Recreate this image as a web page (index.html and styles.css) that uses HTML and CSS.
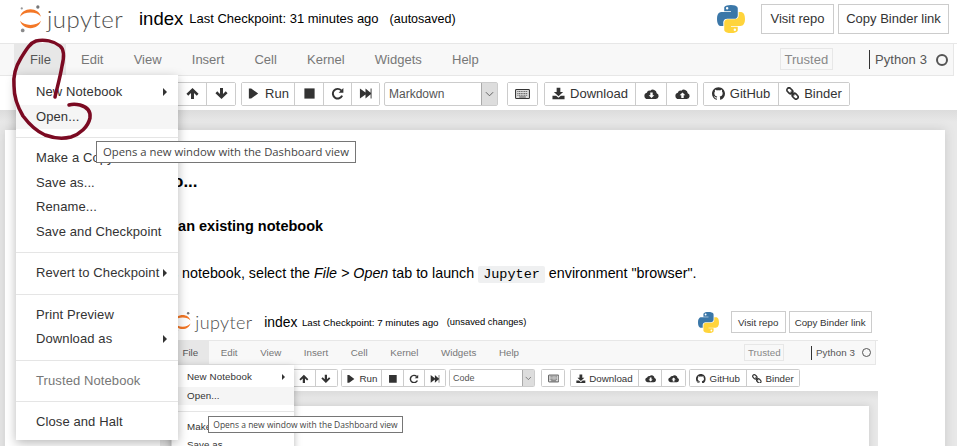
FILE: index.html
```html
<!DOCTYPE html>
<html lang="en">
<head>
<meta charset="utf-8">
<title>index - Jupyter</title>
<link rel="stylesheet" href="styles.css">
</head>
<body>
<svg class="sprite" aria-hidden="true">
  <symbol id="i-up" viewBox="0 0 14 14"><path d="M7 1 13.5 7.4 11.6 9.3 8.6 6.4V13H5.4V6.4L2.4 9.3.5 7.4Z"/></symbol>
  <symbol id="i-down" viewBox="0 0 14 14"><path d="M7 13 .5 6.6 2.4 4.7 5.4 7.6V1H8.600V7.600L11.600 4.700 13.500 6.600Z"/></symbol>
  <symbol id="i-step" viewBox="0 0 14 14"><path d="M2 1.500H4.500V12.500H2ZM4.500 1.500 12 7 4.500 12.500Z"/></symbol>
  <symbol id="i-stop" viewBox="0 0 14 14"><path d="M1.500 1.500H12.500V12.500H1.500Z"/></symbol>
  <symbol id="i-redo" viewBox="0 0 14 14"><path d="M11 3.600A5.200 5.200 0 1 0 12 9.300" fill="none" stroke="currentColor" stroke-width="2.100"/><path d="M8.200 6.200H13.300V1Z"/></symbol>
  <symbol id="i-ff" viewBox="0 0 14 14"><path d="M1 1.500 7 6V1.500L12.500 6.300V1.500H13.500V12.500H12.500V7.700L7 12.500V8L1 12.500Z"/></symbol>
  <symbol id="i-key" viewBox="0 0 16 12"><rect x=".6" y="1.100" width="14.800" height="9.800" rx="1" fill="#ddd" stroke="#333" stroke-width="1.100"/><path d="M2.500 3.400H13.500M2.500 5.400H13.500M2.500 7.400H13.500" stroke="#666" stroke-width="1.100" stroke-dasharray="1.200 .6"/><path d="M4.500 9.200H11.500" stroke="#444" stroke-width="1"/></symbol>
  <symbol id="i-dl" viewBox="0 0 14 14"><path d="M5 .8H9V5.500H12L7 10 2 5.500H5Z"/><path d="M.5 9.500H4.500L7 11.700 9.500 9.500H13.500V13.300H.5Z"/></symbol>
  <symbol id="i-cdl" viewBox="0 0 15 12"><path d="M3.500 11A3.200 3.200 0 0 1 2.800 4.700 3 3 0 0 1 6.300 2.700 3.800 3.800 0 0 1 12.700 5.200 3 3 0 0 1 11.800 11Z"/><path d="M6.300 4.500H8.700V7.200H10.300L7.500 10 4.700 7.200H6.300Z" fill="#fff"/></symbol>
  <symbol id="i-cul" viewBox="0 0 15 12"><path d="M3.500 11A3.200 3.200 0 0 1 2.800 4.700 3 3 0 0 1 6.300 2.700 3.800 3.800 0 0 1 12.700 5.200 3 3 0 0 1 11.800 11Z"/><path d="M6.300 10H8.700V7.300H10.300L7.500 4.500 4.700 7.300H6.300Z" fill="#fff"/></symbol>
  <symbol id="i-gh" viewBox="0 0 24 24"><path d="M12 .297c-6.630 0-12 5.373-12 12 0 5.303 3.438 9.800 8.205 11.385.6.113.82-.258.82-.577 0-.285-.01-1.040-.015-2.040-3.338.724-4.042-1.610-4.042-1.610C4.422 18.070 3.633 17.700 3.633 17.700c-1.087-.744.084-.729.084-.729 1.205.084 1.838 1.236 1.838 1.236 1.070 1.835 2.809 1.305 3.495.998.108-.776.417-1.305.76-1.605-2.665-.3-5.466-1.332-5.466-5.930 0-1.310.465-2.380 1.235-3.220-.135-.303-.54-1.523.105-3.176 0 0 1.005-.322 3.300 1.230.96-.267 1.980-.399 3-.405 1.020.006 2.040.138 3 .405 2.280-1.552 3.285-1.230 3.285-1.230.645 1.653.24 2.873.12 3.176.765.84 1.230 1.910 1.230 3.220 0 4.610-2.805 5.625-5.475 5.920.42.36.81 1.096.81 2.220 0 1.606-.015 2.896-.015 3.286 0 .315.21.69.825.57C20.565 22.092 24 17.592 24 12.297c0-6.627-5.373-12-12-12"/></symbol>
  <symbol id="i-link" viewBox="0 0 14 14"><g fill="none" stroke="currentColor" stroke-width="1.800"><rect x=".6" y="1.800" width="7" height="4.600" rx="2.300" transform="rotate(45 4.100 4.100)"/><rect x="6.400" y="7.600" width="7" height="4.600" rx="2.300" transform="rotate(45 9.900 9.900)"/></g><path d="M5 5 9 9" stroke="currentColor" stroke-width="1.600"/></symbol>
  <symbol id="i-py" viewBox="0 0 24 24"><path fill="#3b77a8" d="M11.900 0C5.800 0 6.200 2.600 6.200 2.600v2.700h5.800v.8H3.900S0 5.700 0 12s3.400 6.100 3.400 6.100h2v-2.900s-.1-3.400 3.400-3.400h5.800s3.200.1 3.200-3.100V3.100S18.300 0 11.900 0ZM8.700 1.800a1 1 0 1 1 0 2.100 1 1 0 0 1 0-2.100Z"/><path fill="#ffd43b" d="M12.100 24c6.100 0 5.700-2.600 5.700-2.600v-2.700H12v-.8h8.100S24 18.300 24 12s-3.400-6.100-3.400-6.100h-2v2.900s.1 3.400-3.400 3.400H9.400s-3.200-.1-3.200 3.100v5.600S5.700 24 12.100 24Zm3.200-1.800a1 1 0 1 1 0-2.100 1 1 0 0 1 0 2.100Z"/></symbol>
  <symbol id="i-jup" viewBox="0 0 25 31"><path fill="#f37726" d="M12.500 9C7.500 9 3.200 10.700 1.200 13.500 2.300 8.600 7 5.500 12.500 5.500S22.700 8.600 23.800 13.500C21.800 10.700 17.500 9 12.500 9ZM12.500 22.500C17.500 22.500 21.800 20.800 23.800 18 22.700 22.900 18 26 12.500 26S2.300 22.900 1.200 18C3.200 20.800 7.500 22.500 12.500 22.500Z"/><circle cx="20.500" cy="3" r="1.800" fill="#767677"/><circle cx="3" cy="4.500" r="1.200" fill="#989798"/><circle cx="4" cy="28.500" r="2" fill="#8a8a8b"/></symbol>
</svg>

<div class="app">
  <header class="hdr">
    <div class="logo"><svg class="logo-mark"><use href="#i-jup"/></svg><span class="logo-word">jupyter</span></div>
    <span class="nb-name">index</span>
    <span class="checkpoint">Last Checkpoint: 31 minutes ago</span>
    <span class="autosave">(autosaved)</span>
    <svg class="py-logo"><use href="#i-py"/></svg>
    <a class="hdr-btn hdr-visit">Visit repo</a>
    <a class="hdr-btn hdr-copy">Copy Binder link</a>
  </header>
  <nav class="menubar">
    <ul class="menus">
      <li class="menu menu-open">File</li><li class="menu">Edit</li><li class="menu">View</li><li class="menu">Insert</li><li class="menu">Cell</li><li class="menu">Kernel</li><li class="menu">Widgets</li><li class="menu">Help</li>
    </ul>
    <span class="trusted">Trusted</span>
    <span class="kernel">Python 3</span>
    <span class="kernel-dot"></span>
  </nav>
  <div class="toolbar">
    <div class="group"><button class="tb tb-first"><svg class="ic"><use href="#i-up"/></svg></button><button class="tb"><svg class="ic"><use href="#i-down"/></svg></button></div>
    <div class="group group-run"><button class="tb tb-run"><svg class="ic"><use href="#i-step"/></svg>Run</button><button class="tb tb-stop"><svg class="ic"><use href="#i-stop"/></svg></button><button class="tb"><svg class="ic"><use href="#i-redo"/></svg></button><button class="tb"><svg class="ic"><use href="#i-ff"/></svg></button></div>
    <div class="cell-type"><span class="cell-label">Markdown</span><span class="cell-arrow"><svg viewBox="0 0 10 6"><path d="M1 1 5 5 9 1" fill="none" stroke="#555" stroke-width="1"/></svg></span></div>
    <div class="group group-key"><button class="tb tb-key"><svg class="ic ic-key"><use href="#i-key"/></svg></button></div>
    <div class="group"><button class="tb tb-dl"><svg class="ic"><use href="#i-dl"/></svg>Download</button><button class="tb tb-cloud"><svg class="ic ic-cloud"><use href="#i-cdl"/></svg></button><button class="tb tb-cloud"><svg class="ic ic-cloud"><use href="#i-cul"/></svg></button></div>
    <div class="group"><button class="tb tb-gh"><svg class="ic"><use href="#i-gh"/></svg>GitHub</button><button class="tb tb-bd"><svg class="ic"><use href="#i-link"/></svg>Binder</button></div>
  </div>
  <main class="site">
    <article class="notebook">
      <h3 class="title">Go to...</h3>
      <h4 class="subtitle">Open an existing notebook</h4>
      <p class="para">To open this notebook, select the <em>File &gt; Open</em> tab to launch <code class="pill">Jupyter</code> environment "browser".</p>
      <figure class="figure">
        <div class="app">
          <header class="hdr">
            <div class="logo"><svg class="logo-mark"><use href="#i-jup"/></svg><span class="logo-word">jupyter</span></div>
            <span class="nb-name">index</span>
            <span class="checkpoint">Last Checkpoint: 7 minutes ago</span>
            <span class="autosave">(unsaved changes)</span>
            <svg class="py-logo"><use href="#i-py"/></svg>
            <a class="hdr-btn hdr-visit">Visit repo</a>
            <a class="hdr-btn hdr-copy">Copy Binder link</a>
          </header>
          <nav class="menubar">
            <ul class="menus">
              <li class="menu menu-open">File</li><li class="menu">Edit</li><li class="menu">View</li><li class="menu">Insert</li><li class="menu">Cell</li><li class="menu">Kernel</li><li class="menu">Widgets</li><li class="menu">Help</li>
            </ul>
            <span class="trusted">Trusted</span>
            <span class="kernel">Python 3</span>
            <span class="kernel-dot"></span>
          </nav>
          <div class="toolbar">
            <div class="group"><button class="tb tb-first"><svg class="ic"><use href="#i-up"/></svg></button><button class="tb"><svg class="ic"><use href="#i-down"/></svg></button></div>
            <div class="group group-run"><button class="tb tb-run"><svg class="ic"><use href="#i-step"/></svg>Run</button><button class="tb tb-stop"><svg class="ic"><use href="#i-stop"/></svg></button><button class="tb"><svg class="ic"><use href="#i-redo"/></svg></button><button class="tb"><svg class="ic"><use href="#i-ff"/></svg></button></div>
            <div class="cell-type"><span class="cell-label">Code</span><span class="cell-arrow"><svg viewBox="0 0 10 6"><path d="M1 1 5 5 9 1" fill="none" stroke="#555" stroke-width="1"/></svg></span></div>
            <div class="group group-key"><button class="tb tb-key"><svg class="ic ic-key"><use href="#i-key"/></svg></button></div>
            <div class="group"><button class="tb tb-dl"><svg class="ic"><use href="#i-dl"/></svg>Download</button><button class="tb tb-cloud"><svg class="ic ic-cloud"><use href="#i-cdl"/></svg></button><button class="tb tb-cloud"><svg class="ic ic-cloud"><use href="#i-cul"/></svg></button></div>
            <div class="group"><button class="tb tb-gh"><svg class="ic"><use href="#i-gh"/></svg>GitHub</button><button class="tb tb-bd"><svg class="ic"><use href="#i-link"/></svg>Binder</button></div>
          </div>
          <main class="site">
            <article class="notebook notebook-inner"></article>
          </main>
          <ul class="file-menu">
            <li class="item item-sub">New Notebook</li>
            <li class="item item-hover">Open...</li>
            <li class="sep"></li>
            <li class="item">Make a Copy...</li>
            <li class="item">Save as...</li>
          </ul>
          <div class="tooltip tooltip-inner">Opens a new window with the Dashboard view</div>
        </div>
      </figure>
    </article>
  </main>
  <ul class="file-menu">
    <li class="item item-sub">New Notebook</li>
    <li class="item item-hover">Open...</li>
    <li class="sep"></li>
    <li class="item">Make a Copy...</li>
    <li class="item">Save as...</li>
    <li class="item">Rename...</li>
    <li class="item">Save and Checkpoint</li>
    <li class="sep"></li>
    <li class="item item-sub">Revert to Checkpoint</li>
    <li class="sep"></li>
    <li class="item">Print Preview</li>
    <li class="item item-sub">Download as</li>
    <li class="sep"></li>
    <li class="item item-off">Trusted Notebook</li>
    <li class="sep"></li>
    <li class="item">Close and Halt</li>
  </ul>
  <div class="tooltip">Opens a new window with the Dashboard view</div>
  <svg class="scribble" viewBox="0 0 100 145"><path d="M55 97C57 88 60 78 62 66 64 58 65 50 60 46 54 41 44 39 36 41 30 43 26 50 21 58 16 66 13 76 14 86 14 98 17 106 23 116 29 124 36 131 45 135 53 138 63 139 71 137 80 134 88 127 90 118 91 111 87 107 80 105 76 104 72 104 69 105" fill="none" stroke="#7b0a22" stroke-width="3.500" stroke-linecap="round" stroke-linejoin="round"/></svg>
</div>
</body>
</html>
```

FILE: styles.css
```css
html, body { margin: 0; padding: 0; background: #fff; }
body { width: 957px; height: 446px; overflow: hidden; }
* { box-sizing: border-box; }
ul { list-style: none; margin: 0; padding: 0; }
.sprite { position: absolute; width: 0; height: 0; }

.app {
  position: relative; width: 957px; height: 446px; overflow: hidden;
  display: flex; flex-direction: column; background: #fff;
  font-family: "Liberation Sans", Arial, sans-serif; font-size: 13px; color: #333;
}

/* header */
.hdr { display: flex; align-items: center; height: 44px; flex: none; padding: 0 8px 6px 18px; border-bottom: 1px solid #e7e7e7; background: #fff; }
.logo { display: flex; align-items: center; width: 121px; flex: none; }
.logo-mark { width: 23px; height: 29px; flex: none; margin: 0 5px 0 1px; }
.logo-word { font-family: Lato, "Liberation Sans", sans-serif; font-weight: 300; font-size: 24px; line-height: 30px; color: #4e4e4e; letter-spacing: .5px; }
.nb-name { font-size: 18.500px; color: #000; margin-right: 6px; }
.checkpoint { font-size: 13px; color: #000; }
.autosave { font-size: 12.500px; color: #000; margin-left: 11px; flex: 1; }
.py-logo { width: 28px; height: 28px; flex: none; margin-right: 12px; }
.hdr-btn { display: flex; align-items: center; justify-content: center; height: 30px; border: 1px solid #ccc; color: #333; font-size: 13px; margin-left: 4px; white-space: nowrap; }
.hdr-visit { width: 73px; }
.hdr-copy { width: 111px; }

/* menubar */
.menubar { display: flex; align-items: center; width: 954px; height: 32px; flex: none; padding-left: 14px; background: #f8f8f8; border-bottom: 1px solid #e7e7e7; border-right: 1px solid #e7e7e7; }
.menus { display: flex; height: 100%; flex: 1; }
.menu { display: flex; align-items: center; padding: 0 15.100px; color: #777; font-size: 13px; }
.menu-open { padding: 0 15px 0 16px; background: #e7e7e7; color: #555; }
.trusted { display: flex; align-items: center; justify-content: center; width: 53px; height: 22px; margin-right: 36px; margin-top: -1px; border: 1px solid #e7e7e7; color: #888; font-size: 13px; }
.kernel { height: 19px; line-height: 19px; padding-left: 5px; border-left: 1px solid #333; color: #555; font-size: 13px; letter-spacing: .1px; }
.kernel-dot { width: 12px; height: 12px; margin: 0 5px 0 9px; border: 2px solid #555; border-radius: 50%; }

/* toolbar */
.toolbar { display: flex; align-items: center; height: 34px; flex: none; padding: 1px 0 0 150px; gap: 5px; background: #fff; }
.group { display: flex; height: 24px; border: 1px solid #ccc; border-radius: 2px; background: #fff; }
.tb { display: flex; align-items: center; justify-content: center; gap: 5px; width: 29px; height: 100%; padding: 0; border: 0; border-left: 1px solid #ccc; background: #fff; color: #333; font: 13px/1 "Liberation Sans", Arial, sans-serif; white-space: nowrap; }
.tb:first-child { border-left: 0; }
.tb-first { width: 55px; padding-left: 27px; }
.group-run .tb { width: 28px; }
.group-run .tb-run { width: 52px; }
.group-run .tb-stop { width: 29px; }
.tb-key { width: 29px; }
.tb-dl { width: 90px; }
.tb-cloud { width: 31px; }
.tb-gh { width: 74px; }
.tb-bd { width: 71px; }
.ic { width: 13px; height: 13px; fill: #333; color: #333; flex: none; }
.ic-key { width: 15px; height: 12px; }
.ic-cloud { width: 15px; height: 12px; }
.group-key { margin: 0 1px 0 4px; }
.cell-type { display: flex; align-items: stretch; width: 114px; height: 24px; margin-left: -1px; border: 1px solid #ccc; border-radius: 2px; background: #fff; }
.cell-label { flex: 1; padding-left: 4px; line-height: 22px; color: #555; font-size: 12px; }
.cell-arrow { display: flex; align-items: center; justify-content: center; width: 16px; background: #ddd; border-left: 1px solid #aaa; }
.cell-arrow svg { width: 9px; height: 6px; }

/* notebook area */
.site { flex: 1; min-height: 0; padding: 20px 12px 0 5px; background: linear-gradient(#dcdcdc, #e8e8e8 12px, #e8e8e8); }
.notebook { height: 600px; padding: 42px 0 0 173px; background: #fff; box-shadow: 0 0 10px rgba(87, 87, 87, .2); }
.notebook-inner { margin-left: 10px; }
.title { margin: 0; font-size: 17px; line-height: 20px; color: #000; font-weight: 700; text-indent: -39px; }
.subtitle { margin: 24px 0 0; font-size: 14.500px; line-height: 20px; color: #000; font-weight: 700; text-indent: -41px; }
.para { margin: 27px 0 0; font-size: 14.300px; line-height: 20px; color: #000; white-space: nowrap; text-indent: -77px; }
.pill { padding: 1px 5px; border-radius: 2px; background: #eff0f1; font-family: "Liberation Mono", monospace; font-size: 13.500px; }

/* embedded screenshot */
.figure { margin: 31px 0 0 -24px; zoom: .75; width: 957px; }

/* file menu */
.file-menu { position: absolute; left: 16px; top: 75px; width: 162px; padding: 5px 0; background: #fff; box-shadow: 0 3px 10px rgba(0, 0, 0, .28); }
.item { position: relative; height: 24.500px; line-height: 24.500px; padding-left: 20px; color: #333; font-size: 13px; letter-spacing: .1px; white-space: nowrap; }
.item-hover { background: #f5f5f5; }
.item-off { color: #777; }
.item-sub::after { content: ""; position: absolute; right: 11px; top: 8px; border-left: 4px solid #333; border-top: 4px solid transparent; border-bottom: 4px solid transparent; }
.sep { height: 1px; margin: 8px 0; background: #e5e5e5; }

/* tooltip */
.tooltip { position: absolute; left: 96px; top: 141px; width: 260px; height: 22px; line-height: 20px; text-align: center; background: #fff; border: 1px solid #767676; color: #444; font-family: "Open Sans", sans-serif; font-size: 11.300px; white-space: nowrap; }
.tooltip-inner { left: 64px; top: 144px; }

/* annotation */
.scribble { position: absolute; left: 0; top: 0; width: 100px; height: 145px; pointer-events: none; }
```
